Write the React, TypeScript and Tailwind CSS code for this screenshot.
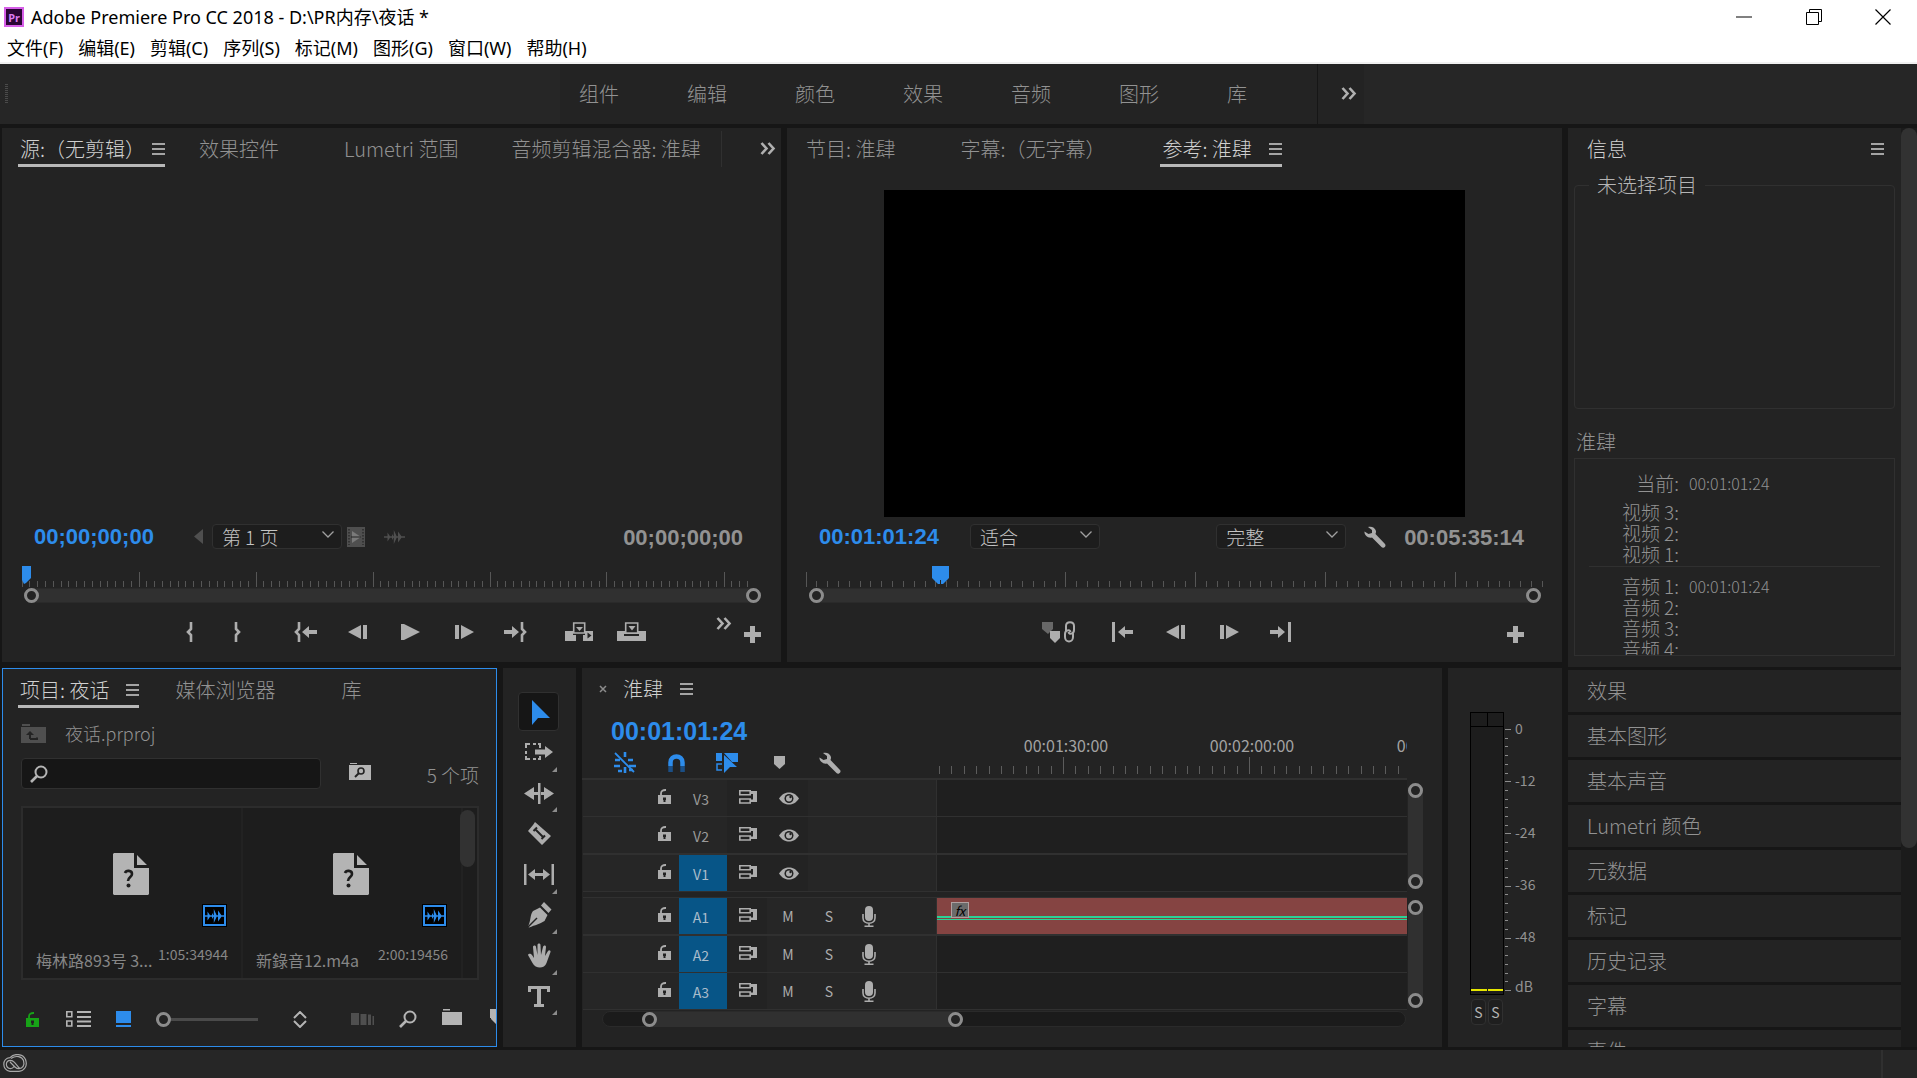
import React from "react";
import clsx from "clsx";

type IconProps = { w: number; h: number; className?: string; children: React.ReactNode };

const Icon = ({ w, h, className, children }: IconProps) => (
  <svg width={w} height={h} viewBox={`0 0 ${w} ${h}`} fill="currentColor" className={clsx("shrink-0", className)} aria-hidden="true">
    {children}
  </svg>
);

/* ---------- icons ---------- */

const MenuLines = () => (
  <Icon w={13} h={12} className="text-[#a4a4a4]">
    <path d="M0 0h13v2H0zM0 5h13v2H0zM0 10h13v2H0z" />
  </Icon>
);

const DoubleChevron = () => (
  <Icon w={16} h={13} className="text-[#b0b0b0]">
    <path d="M1.5 1l5 5.5-5 5.5M8.5 1l5 5.5-5 5.5" fill="none" stroke="currentColor" strokeWidth="2.6" />
  </Icon>
);

const Plus = () => (
  <Icon w={17} h={17}>
    <path d="M6 0h5v6h6v5h-6v6H6v-6H0V6h6z" />
  </Icon>
);

const Wrench = () => (
  <Icon w={22} h={22}>
    <path d="M4 1C7 0 11 1 12 5c0 1 0 2-.5 3L21 18c1 1 .5 3-1 3.5-1 .5-2 0-2.5-.5L8 11.5C4 12.5 0 9 .5 5.5L4.500 8 8 7V4z" />
  </Icon>
);

const Magnifier = () => (
  <svg width="18" height="18" viewBox="0 0 18 18" fill="none" stroke="currentColor" aria-hidden="true">
    <circle cx="11" cy="7" r="5.5" strokeWidth="2" />
    <path d="M7 11L1 17" strokeWidth="2.6" />
  </svg>
);

const Lock = () => (
  <Icon w={13} h={15}>
    <path d="M0 6h13v9H0z" />
    <path d="M3 7V4.500C3 2 5 .8 8 1" fill="none" stroke="currentColor" strokeWidth="1.8" />
    <path d="M5 8.500h3v2.500H7.500v2h-2v-2H5z" fill="#222" />
  </Icon>
);

const SyncLock = () => (
  <Icon w={18} h={14}>
    <path d="M.8.8h10.400v4H.8zM.8 9h10.400v4H.8z" fill="none" stroke="currentColor" strokeWidth="1.6" />
    <path d="M11 1h7v11h-7V9.500h3V4h-3z" />
  </Icon>
);

const Eye = () => (
  <Icon w={20} h={13}>
    <path d="M0 6.500C3 2 6.500.5 10 .5s7 1.500 10 6c-3 4.500-6.500 6-10 6s-7-1.500-10-6z" />
    <circle cx="10" cy="6.5" r="4.5" fill="#222" />
    <circle cx="10" cy="6.5" r="3" />
    <circle cx="11.5" cy="5" r="1.2" fill="#222" />
  </Icon>
);

const Mic = () => (
  <Icon w={14} h={21}>
    <rect x="3" y="0" width="8" height="15" rx="4" />
    <path d="M1 8v4c0 7 12 7 12 0V8M7 17v3M2.500 20.200h9" fill="none" stroke="currentColor" strokeWidth="1.6" />
  </Icon>
);

const MarkIn = () => (
  <Icon w={7} h={20}>
    <path d="M5 0v7l-3 3 3 3v7" fill="none" stroke="currentColor" strokeWidth="2.6" />
  </Icon>
);

const MarkOut = () => (
  <Icon w={7} h={20}>
    <path d="M2 0v7l3 3-3 3v7" fill="none" stroke="currentColor" strokeWidth="2.6" />
  </Icon>
);

const GoToIn = () => (
  <Icon w={23} h={20}>
    <path d="M5 0v7l-3 3 3 3v7" fill="none" stroke="currentColor" strokeWidth="2.6" />
    <path d="M8 10l7-6v4h8v4h-8v4z" />
  </Icon>
);

const GoToOut = () => (
  <Icon w={23} h={20}>
    <path d="M18 0v7l3 3-3 3v7" fill="none" stroke="currentColor" strokeWidth="2.6" />
    <path d="M15 10L8 4v4H0v4h8v4z" />
  </Icon>
);

const StepBack = () => (
  <Icon w={19} h={14}>
    <path d="M13 0v14L0 7zM15 0h4v14h-4z" />
  </Icon>
);

const StepForward = () => (
  <Icon w={19} h={14}>
    <path d="M6 0v14l13-7zM0 0h4v14H0z" />
  </Icon>
);

const Play = () => (
  <Icon w={19} h={16}>
    <path d="M0 0h3l16 8-16 8H0z" />
  </Icon>
);

const Insert = () => (
  <Icon w={28} h={19}>
    <path d="M0 9h8v4h3v6H0zM20 9h8v10H18v-6h2z" />
    <path d="M8.700 1h11v10h-11z" fill="#232323" stroke="currentColor" strokeWidth="1.6" />
    <path d="M11 5h7l-3.500 4z" />
    <path d="M22.500 10.500v6l4-3z" fill="#232323" />
  </Icon>
);

const Overwrite = () => (
  <Icon w={29} h={19}>
    <path d="M0 9h29v10H0z" />
    <path d="M7 12h15v2H7z" fill="#232323" />
    <path d="M8.700 1h12v10h-12z" fill="#232323" stroke="currentColor" strokeWidth="1.6" />
    <path d="M11.500 4h7l-3.500 4.500z" />
  </Icon>
);

const MarkerLink = () => (
  <Icon w={33} h={22}>
    <path d="M0 1h11v7l-5 5-6-5z" opacity=".5" />
    <path d="M8 10h10v7l-5 5-5-5z" />
    <path d="M24 10V5c0-5 8-5 8 0v4c0 4-5 5-5.500 2M31 11v5c0 6-8 6-8 0v-3c0-4 5-5 5.500-2" fill="none" stroke="currentColor" strokeWidth="2" />
  </Icon>
);

const GoToStart = () => (
  <Icon w={21} h={20}>
    <path d="M0 0h3v20H0zM6 10l7-6v4h8v4h-8v4z" />
  </Icon>
);

const GoToEnd = () => (
  <Icon w={21} h={20}>
    <path d="M18 0h3v20h-3zM15 10L8 4v4H0v4h8v4z" />
  </Icon>
);

const FilmFrame = () => (
  <Icon w={18} h={20} className="text-[#4f4f4f]">
    <path d="M0 0h18v20H0z" />
    <path d="M2 2v16M16 2v16" stroke="#232323" strokeWidth="1.2" strokeDasharray="1.5 1.5" />
    <path d="M5 4l9 6-9 6z" fill="#7a7a7a" />
    <path d="M4 10h10" stroke="#232323" />
  </Icon>
);

const Waveform = () => (
  <Icon w={21} h={14}>
    <path d="M0 6.300h21v1.400H0zM3.500 2.500L6.500 7l-3 4.500zM8 4l2 3-2 3zM9.800 0l3.200 7-3.200 7zM14 1.500l4 5.500-4 5.500z" />
  </Icon>
);

const MarkerIcon = () => (
  <Icon w={11} h={13}>
    <path d="M0 0h11v8l-5.500 5L0 8z" />
  </Icon>
);

/* ---------- shared pieces ---------- */

const Ring = () => <span className="size-[15px] shrink-0 rounded-full border-[3px] border-[#8c8c8c] bg-[#232323]" />;

const Timecode = ({ value, blue }: { value: string; blue?: boolean }) => (
  <span
    className={clsx(
      "font-['Liberation_Sans',sans-serif] text-[22px] font-bold leading-6",
      blue ? "text-[#2d8ceb]" : "text-[#929292]"
    )}
  >
    {value}
  </span>
);

const Tab = ({ label, active, tight }: { label: string; active?: boolean; tight?: boolean }) => (
  <button
    className={clsx(
      "flex h-[39px] items-center whitespace-nowrap border-b-[3px] pl-[2px] pt-[5px] leading-6",
      tight ? "gap-[7px]" : "gap-[17px]",
      active ? "border-[#b8b8b8] text-[#d0d0d0]" : "border-transparent text-[#929292]"
    )}
  >
    {label}
    {active && <MenuLines />}
  </button>
);

const Dropdown = ({ label, value }: { label: string; value: string }) => (
  <div className="relative">
    <select
      aria-label={label}
      className="h-[25px] w-[130px] appearance-none rounded border border-[#303030] bg-[#1d1d1d] pl-[9px] text-[19px] leading-5 text-[#c4c4c4]"
    >
      <option>{value}</option>
    </select>
    <Icon w={12} h={7} className="pointer-events-none absolute right-2 top-[9px] text-[#a0a0a0]">
      <path d="M.5.5L6 6 11.500.5" fill="none" stroke="currentColor" strokeWidth="1.3" />
    </Icon>
  </div>
);

type RulerProps = { span: number; step: number; every: number; head: number; headW: number };

// ticks are placed in percent so that the ruler stretches with its panel
const Ruler = ({ span, step, every, head, headW }: RulerProps) => {
  const count = Math.floor(span / step) + 1;
  return (
    <div className="relative flex h-8 items-end">
      <svg width="100%" height="16" className="overflow-visible">
        {Array.from({ length: count }, (_, i) => (
          <line
            key={i}
            x1={`${((i * step) / span) * 100}%`}
            x2={`${((i * step) / span) * 100}%`}
            y1={i % every === 0 ? 0 : 9}
            y2={15}
            stroke="#565656"
            shapeRendering="crispEdges"
          />
        ))}
      </svg>
      <svg width={headW} height="18" className="absolute top-2.5" style={{ left: `${(head / span) * 100}%` }}>
        {headW > 10 ? (
          <path d="M0 0h17v12l-6 6h-2v-4h-1v4H6l-6-6z" fill="#2d8ceb" />
        ) : (
          <path d="M0 0h9v12l-5 5-2 1-2-4z" fill="#2d8ceb" />
        )}
      </svg>
    </div>
  );
};

const ZoomBar = () => (
  <div className="flex h-[15px] items-center justify-between rounded-full border-y border-[#2a2a2a] bg-[#303030]">
    <Ring />
    <Ring />
  </div>
);

const TransportButton = ({ name, className, children }: { name: string; className?: string; children: React.ReactNode }) => (
  <button aria-label={name} className={clsx("flex h-8 items-center justify-center", className)}>
    {children}
  </button>
);

/* ---------- window chrome ---------- */

const menus = ["文件(F)", "编辑(E)", "剪辑(C)", "序列(S)", "标记(M)", "图形(G)", "窗口(W)", "帮助(H)"];

const TitleBar = () => (
  <header className="border-b-2 border-[#f0f0f0] bg-white font-['Noto_Sans','Noto_Sans_CJK_SC',sans-serif] text-[18px] font-normal text-black">
    <div className="flex h-[34px] items-center pl-1">
      <span className="flex size-5 items-center justify-center border-2 border-[#d65fe8] bg-[#2a0634] text-[11px] font-bold leading-none text-[#dd7bf0]">
        Pr
      </span>
      <h1 className="ml-[7px] whitespace-nowrap leading-6">Adobe Premiere Pro CC 2018 - D:\PR内存\夜话 *</h1>
      <div className="ml-auto flex">
        <button aria-label="最小化" className="flex h-[34px] w-[70px] items-center justify-center">
          <Icon w={16} h={16}><path d="M0 7.500h16v1H0z" /></Icon>
        </button>
        <button aria-label="还原" className="flex h-[34px] w-[70px] items-center justify-center">
          <Icon w={16} h={16}>
            <path d="M.5 3.500h12v12H.5zM3.500 3.500v-3h12v12h-3" fill="none" stroke="currentColor" />
          </Icon>
        </button>
        <button aria-label="关闭" className="flex h-[34px] w-[68px] items-center justify-center">
          <Icon w={16} h={16}><path d="M.5.5l15 15M15.500.5l-15 15" stroke="currentColor" strokeWidth="1.2" /></Icon>
        </button>
      </div>
    </div>
    <nav className="flex h-7 items-center gap-[15px] pl-[7px]">
      {menus.map((m) => (
        <button key={m} className="leading-6">{m}</button>
      ))}
    </nav>
  </header>
);

const workspaces = ["组件", "编辑", "颜色", "效果", "音频", "图形", "库"];

const WorkspaceBar = () => (
  <nav className="flex h-[60px] shrink-0 items-stretch bg-[#262626]">
    <div className="flex w-[560px] items-center pl-[5px]">
      <Icon w={3} h={20} className="text-[#4a4a4a]">
        <path d="M1.500 0v20" stroke="currentColor" strokeWidth="3" strokeDasharray="1 1" />
      </Icon>
    </div>
    <div className="flex w-[758px] items-center gap-[68px] border-r border-[#161616] bg-[#232323] pb-px pl-[19px]">
      {workspaces.map((w) => (
        <button key={w} className="leading-6 text-[#929292]">{w}</button>
      ))}
    </div>
    <button aria-label="更多工作区" className="flex w-[46px] items-center justify-center bg-[#232323] pb-0.5 pl-4">
      <DoubleChevron />
    </button>
  </nav>
);

/* ---------- monitors ---------- */

const SourceMonitor = () => (
  <section className="flex min-w-0 flex-[779_1_0%] flex-col bg-[#232323]">
    <div className="flex h-10 items-start pl-4">
      <Tab label="源:（无剪辑）" active tight />
      <div className="ml-8"><Tab label="效果控件" /></div>
      <div className="ml-[63px]"><Tab label="Lumetri 范围" /></div>
      <div className="ml-[51px]"><Tab label="音频剪辑混合器: 淮肆" /></div>
      <button aria-label="更多面板" className="ml-auto mt-[3px] flex h-9 items-center border-l border-[#303030] pb-0.5 pl-[38px] pr-[5px]">
        <DoubleChevron />
      </button>
    </div>
    <div className="min-h-0 flex-1" />
    <div className="flex h-[39px] items-center pl-8 pr-[38px]">
      <Timecode value="00;00;00;00" blue />
      <button aria-label="上一页" className="ml-10 mr-[9px] text-[#4f4f4f]">
        <Icon w={9} h={15}><path d="M9 0v15L0 7.500z" /></Icon>
      </button>
      <Dropdown label="页" value="第 1 页" />
      <span className="ml-[5px]"><FilmFrame /></span>
      <span className="ml-[19px] text-[#4f4f4f]"><Waveform /></span>
      <span className="ml-auto"><Timecode value="00;00;00;00" /></span>
    </div>
    <div className="pl-5 pr-[27px]">
      <Ruler span={732} step={7.8} every={15} head={0} headW={9} />
    </div>
    <div className="pl-[22px] pr-5"><ZoomBar /></div>
    <div className="flex h-[59px] items-center pb-0.5 pl-[163px] pr-5 text-[#adadad]">
      <TransportButton name="标记入点" className="w-12"><MarkIn /></TransportButton>
      <TransportButton name="标记出点" className="w-[49px]"><MarkOut /></TransportButton>
      <TransportButton name="转到入点" className="ml-[17px] w-[52px]"><GoToIn /></TransportButton>
      <TransportButton name="后退一帧" className="w-[52px]"><StepBack /></TransportButton>
      <TransportButton name="播放" className="w-[54px]"><Play /></TransportButton>
      <TransportButton name="前进一帧" className="w-[54px]"><StepForward /></TransportButton>
      <TransportButton name="转到出点" className="w-12"><GoToOut /></TransportButton>
      <TransportButton name="插入" className="ml-3.5 w-[52px]"><Insert /></TransportButton>
      <TransportButton name="覆盖" className="w-[52px]"><Overwrite /></TransportButton>
      <TransportButton name="更多按钮" className="ml-auto pb-4"><DoubleChevron /></TransportButton>
      <TransportButton name="按钮编辑器" className="ml-3 pt-1.5"><Plus /></TransportButton>
    </div>
  </section>
);

const ProgramMonitor = () => (
  <section className="flex min-w-0 flex-[775_1_0%] flex-col bg-[#232323]">
    <div className="flex h-10 items-start pl-[17px]">
      <Tab label="节目: 淮肆" />
      <div className="ml-[63px]"><Tab label="字幕:（无字幕）" /></div>
      <div className="ml-[55px]"><Tab label="参考: 淮肆" active /></div>
    </div>
    <div className="flex min-h-0 flex-1 justify-center pt-[22px]">
      <div className="aspect-video h-full bg-black" />
    </div>
    <div className="flex h-[39px] items-center pl-8 pr-[38px]">
      <Timecode value="00:01:01:24" blue />
      <div className="ml-[31px]"><Dropdown label="缩放级别" value="适合" /></div>
      <div className="ml-auto"><Dropdown label="回放分辨率" value="完整" /></div>
      <button aria-label="设置" className="ml-[18px] text-[#adadad]"><Wrench /></button>
      <span className="ml-[18px]"><Timecode value="00:05:35:14" /></span>
    </div>
    <div className="pl-[19px] pr-[19px]">
      <Ruler span={737} step={10.83} every={12} head={126} headW={17} />
    </div>
    <div className="pl-[22px] pr-[21px]"><ZoomBar /></div>
    <div className="flex h-[59px] items-center pb-0.5 pl-[245px] pr-[38px] text-[#adadad]">
      <TransportButton name="绞合到节目监视器" className="w-[52px]"><MarkerLink /></TransportButton>
      <TransportButton name="转到开始" className="ml-3 w-[52px]"><GoToStart /></TransportButton>
      <TransportButton name="后退一帧" className="w-[54px]"><StepBack /></TransportButton>
      <TransportButton name="前进一帧" className="w-[54px]"><StepForward /></TransportButton>
      <TransportButton name="转到结束" className="w-12"><GoToEnd /></TransportButton>
      <TransportButton name="按钮编辑器" className="ml-auto pt-1.5"><Plus /></TransportButton>
    </div>
  </section>
);

/* ---------- project ---------- */

const clips = [
  { name: "梅林路893号 3...", time: "1:05:34944" },
  { name: "新錄音12.m4a", time: "2:00:19456" },
];

const ClipCard = ({ name, time }: { name: string; time: string }) => (
  <div className="flex w-[220px] shrink-0 flex-col border-r-2 border-[#222] px-[13px]">
    <div className="flex h-[87px] items-end justify-center pr-0.5">
      <svg width="36" height="42" viewBox="0 0 36 42" fill="#b4b4b4" aria-hidden="true">
        <path d="M1 0h20v15h15v26l-1 1H1l-1-1V1zM24 2l10 10H24z" />
        <path d="M12 20c1-3 7-3 7 1 0 3-4 3-4 7" fill="none" stroke="#1d1d1d" strokeWidth="2.6" />
        <circle cx="15.5" cy="32.5" r="2" fill="#1d1d1d" />
      </svg>
    </div>
    <span className="mr-0.5 mt-2.5 flex h-[21px] w-[23px] items-center justify-center self-end border-2 border-[#2d8ceb] bg-black text-[#2d8ceb] ring-1 ring-black">
      <Waveform />
    </span>
    <div className="mt-[18px] flex justify-between whitespace-nowrap font-normal text-[#868686]">
      <span className="pt-1.5 text-[16px] leading-5">{name}</span>
      <span className="text-[14px] leading-5">{time}</span>
    </div>
  </div>
);

const ProjectPanel = () => (
  <section className="flex w-[495px] shrink-0 flex-col overflow-hidden border border-[#2d8ceb] bg-[#232323]">
    <div className="flex h-[39px] items-start pl-[15px]">
      <Tab label="项目: 夜话" active />
      <div className="ml-[34px]"><Tab label="媒体浏览器" /></div>
      <div className="ml-[64px]"><Tab label="库" /></div>
    </div>
    <div className="mb-[3px] mt-[11px] flex h-7 items-center pl-[18px] text-[#929292]">
      <Icon w={25} h={19} className="text-[#4f4f4f]">
        <path d="M1 0h8v2H1zM0 3h25v16H0z" />
        <path d="M9 15h7v-1.500M9 15V9" fill="none" stroke="#232323" strokeWidth="2" />
        <path d="M5 11l4-4 4 4z" fill="#232323" />
      </Icon>
      <span className="ml-[19px] text-[18px] leading-6">夜话.prproj</span>
    </div>
    <div className="mt-2 flex h-[31px] items-center pl-[18px] pr-[17px]">
      <label className="flex h-[31px] w-[300px] items-center rounded border border-[#303030] bg-[#161616] pl-2 text-[#b4b4b4]">
        <Magnifier />
        <input type="text" aria-label="搜索素材" className="ml-2 w-60 bg-transparent outline-none" />
      </label>
      <button aria-label="从查询创建新的搜索素材箱" className="mb-1 ml-7 text-[#b4b4b4]">
        <Icon w={22} h={17}>
          <path d="M1 0h7v1H1zM0 2h22v15H0z" />
          <circle cx="12" cy="8" r="3" fill="none" stroke="#232323" strokeWidth="1.6" />
          <path d="M10 10l-4 4" stroke="#232323" strokeWidth="2" />
        </Icon>
      </button>
      <span className="ml-auto pt-1 text-[19px] text-[#929292]">5 个项</span>
    </div>
    <div className="ml-[18px] mr-[17px] mt-[17px] flex h-[174px] overflow-hidden border-2 border-[#2c2c2c] bg-[#1d1d1d]">
      {clips.map((c) => (
        <ClipCard key={c.name} {...c} />
      ))}
      <div className="-ml-[3px] pt-0.5">
        <div className="h-[57px] w-[15px] rounded-full bg-[#323232]" />
      </div>
    </div>
    <div className="mt-[21px] flex h-9 items-center pl-[23px] text-[#b4b4b4]">
      <button aria-label="项目可写" className="text-[#17a317]"><Lock /></button>
      <button aria-label="列表视图" className="ml-[27px]">
        <Icon w={25} h={16}>
          <path d="M.8.8h5v5h-5zM.8 10h5v5h-5z" fill="none" stroke="currentColor" strokeWidth="1.6" />
          <path d="M11 0h14v2H11zM11 5h14v2H11zM11 9.500h14v2H11zM11 14h14v2H11z" />
        </Icon>
      </button>
      <button aria-label="图标视图" className="ml-[25px] text-[#2d8ceb]">
        <Icon w={15} h={16}><path d="M0 0h15v12H0zM0 14h15v2H0z" /></Icon>
      </button>
      <input
        type="range"
        aria-label="缩放"
        defaultValue={0}
        className="ml-[25px] h-[15px] w-[102px] appearance-none bg-transparent [&::-webkit-slider-runnable-track]:h-[3px] [&::-webkit-slider-runnable-track]:bg-[#4a4a4a] [&::-webkit-slider-thumb]:-mt-1.5 [&::-webkit-slider-thumb]:size-[15px] [&::-webkit-slider-thumb]:appearance-none [&::-webkit-slider-thumb]:rounded-full [&::-webkit-slider-thumb]:border-[3px] [&::-webkit-slider-thumb]:border-[#8c8c8c] [&::-webkit-slider-thumb]:bg-[#232323]"
      />
      <button aria-label="排序图标" className="ml-[35px]">
        <Icon w={14} h={17}>
          <path d="M1 7l6-6 6 6M1 10l6 6 6-6" fill="none" stroke="currentColor" strokeWidth="2" />
        </Icon>
      </button>
      <button aria-label="自动匹配序列" className="ml-11 text-[#4f4f4f]">
        <Icon w={23} h={12}><path d="M0 0h8v12H0zM9.500 1h6v11h-6zM17 1.500h3V12h-3zM21.500 3H23v9h-1.500z" /></Icon>
      </button>
      <button aria-label="查找" className="ml-[25px]"><Magnifier /></button>
      <button aria-label="新建素材箱" className="ml-[25px] pb-1">
        <Icon w={20} h={16}><path d="M1 0h7v1.500H1zM0 3h20v13H0z" /></Icon>
      </button>
      <button aria-label="新建项" className="ml-7 pb-1">
        <Icon w={14} h={16}><path d="M0 0h14v10H7v6L1 10V9H0z" /></Icon>
      </button>
    </div>
  </section>
);

/* ---------- tools ---------- */

const tools = [
  {
    name: "选择工具",
    flyout: false,
    art: <path d="M8 3v25l6-7h12z" />,
  },
  {
    name: "向前选择轨道工具",
    flyout: true,
    art: (
      <>
        <path d="M2 11V7h4M9 7h3M14 7h2v4M2 14v3M2 19v3h4M9 22h3M14 22h2v-3" fill="none" stroke="currentColor" strokeWidth="2" />
        <path d="M11 12.500h10V9l8 6-8 6v-3.500H11z" />
      </>
    ),
  },
  {
    name: "波纹编辑工具",
    flyout: true,
    art: <path d="M14 5h2.500v21H14zM0 15.500L10 9v5h4v3h-4v5zM30 15.500L20 9v5h-4v3h4v5z" />,
  },
  {
    name: "剃刀工具",
    flyout: false,
    art: (
      <>
        <path d="M11 4l16 14-9 9L4 13l5-6z" />
        <path d="M11 11l8 8M9.500 13l3.500-3.500M17.500 21l3.500-3.500" stroke="#232323" strokeWidth="2" />
      </>
    ),
  },
  {
    name: "外滑工具",
    flyout: true,
    art: <path d="M0 5h2.500v21H0zM27.500 5H30v21h-2.500zM4 15.500L11 10v4h8v-4l7 5.500-7 5.500v-4h-8v4z" />,
  },
  {
    name: "钢笔工具",
    flyout: true,
    art: (
      <>
        <path d="M16 7.500l7.500 7.500-3 6c-5 3-9 4-15.500 6.500l-1-1c3-6 2-12 5-15.500zM20 2l7.500 7.500-3 3.500L17 5.500z" />
        <path d="M4 27l9-9" stroke="#232323" strokeWidth="1.5" />
      </>
    ),
  },
  {
    name: "手形工具",
    flyout: true,
    art: (
      <path d="M4 15c1-2 3-1 4 0l2 3-1-11c0-2 3-2 3 0l1.500 8V5c0-2 3-2 3 0l.5 10 2-8c.5-2 3-2 3 0l-1 9 3-5c1-1.500 3-.5 2.500 1l-4 11c-2 6-11 6-14 0z" />
    ),
  },
  {
    name: "文字工具",
    flyout: true,
    art: <path d="M4 5h22v6h-3V8h-6v15h3v3h-10v-3h3V8H7v3H4z" />,
  },
];

const ToolsPanel = () => (
  <section className="w-[73px] shrink-0 bg-[#232323] pr-0.5 pt-6">
    <div className="grid h-[325px] grid-rows-8 justify-center">
      {tools.map((t, i) => (
        <button
          key={t.name}
          aria-label={t.name}
          className={clsx(
            "relative flex h-[39px] w-[41px] items-center justify-center rounded",
            i === 0 ? "border border-[#303030] bg-[#161616] text-[#2d8ceb]" : "text-[#adadad]"
          )}
        >
          <Icon w={30} h={30}>{t.art}</Icon>
          {t.flyout && (
            <Icon w={5} h={5} className="absolute bottom-0 right-0.5 text-[#8c8c8c]"><path d="M5 0v5H0z" /></Icon>
          )}
        </button>
      ))}
    </div>
  </section>
);

/* ---------- timeline ---------- */

const tracks = [
  { id: "V3", kind: "video", on: false, row: "h-[37px] border-b" },
  { id: "V2", kind: "video", on: false, row: "h-[38px] border-b-2" },
  { id: "V1", kind: "video", on: true, row: "h-[37px] border-b" },
  { id: "A1", kind: "audio", on: true, row: "h-[38px] border-b-2" },
  { id: "A2", kind: "audio", on: true, row: "h-[37px] border-b" },
  { id: "A3", kind: "audio", on: true, row: "h-[37px] border-b" },
];

const Track = ({ id, kind, on, row }: (typeof tracks)[number]) => (
  <div className={clsx("flex border-[#303030] font-normal", row)}>
    <div className="flex w-[354px] shrink-0 items-stretch border-r border-[#303030] bg-[#262626] text-[#adadad]">
      <button aria-label={`锁定 ${id}`} className="flex w-[96px] items-center justify-end pb-1 pr-2"><Lock /></button>
      <button
        className={clsx(
          "w-12 pr-1 pt-0.5 text-[14px]",
          on ? "bg-[#075587] text-[#a9bccb]" : "text-[#9a9a9a]"
        )}
      >
        {id}
      </button>
      <div className={clsx("flex items-center bg-[#232323] pl-3", kind === "video" ? "w-[81px]" : "w-10")}>
        <button aria-label={`同步锁定 ${id}`} className="pb-[3px]"><SyncLock /></button>
        {kind === "video" && <button aria-label={`切换轨道输出 ${id}`} className="ml-[22px] pt-px"><Eye /></button>}
      </div>
      {kind === "audio" && (
        <div className="flex items-center pl-2">
          <button className="w-[26px] text-[14px] leading-5">M</button>
          <button className="ml-[15px] w-[26px] text-[14px] leading-5">S</button>
          <button aria-label={`画外音录制 ${id}`} className="ml-5"><Mic /></button>
        </div>
      )}
    </div>
    <div className="min-w-0 flex-1 bg-[#1f1f1f]">
      {id === "A1" && (
        <div className="relative flex h-9 flex-col justify-center bg-[#854442] pt-[3px]">
          <div className="h-0.5 bg-[#2bd296]" />
          <div className="mt-px h-px bg-[#2bd296]" />
          <span className="absolute left-3.5 top-1 flex h-4 w-[18px] items-center justify-center border border-[#b0a0a0] bg-[#6b6b6b] text-[13px] italic leading-none text-black">
            fx
          </span>
        </div>
      )}
    </div>
  </div>
);

const TimelineRuler = () => (
  <svg width="100%" height="52" className="block font-normal" fontSize="16" fill="#a2a2a2" textAnchor="middle">
    {Array.from({ length: 38 }, (_, i) => {
      const x = Math.round(2 + i * 12.4) + 0.5;
      const major = i % 15 === 10;
      return <line key={i} x1={x} x2={x} y1={major ? 27 : 36} y2={44} stroke="#5c5c5c" />;
    })}
    <text x="129" y="22">00:01:30:00</text>
    <text x="315" y="22">00:02:00:00</text>
    <text x="502" y="22">00:02:30:00</text>
  </svg>
);

const TimelinePanel = () => (
  <section className="flex min-w-0 flex-1 flex-col bg-[#232323]">
    <div className="flex h-[42px] items-center pl-[17px] text-[#d0d0d0]">
      <button aria-label="关闭序列" className="text-[#8c8c8c]">
        <Icon w={8} h={8}><path d="M1 1l6 6M7 1L1 7" stroke="currentColor" strokeWidth="1.5" /></Icon>
      </button>
      <button className="ml-4 flex items-center gap-[17px] leading-6">淮肆<MenuLines /></button>
    </div>
    <div className="flex h-[68px]">
      <div className="w-[355px] shrink-0 pl-[29px]">
        <div className="pt-[7px] font-['Liberation_Sans',sans-serif] text-[25px] font-bold leading-7 text-[#2d8ceb]">00:01:01:24</div>
        <div className="flex h-7 items-center pt-[7px] text-[#2d8ceb]">
          <button aria-label="嵌套" className="ml-[3px]">
            <Icon w={22} h={21}>
              <path d="M11 0v5M11 15v6M1 8h5M14 8h5M0 14h6M15 14h7M4 19h4M15 18h4" stroke="currentColor" strokeWidth="2.6" />
              <path d="M1 1l19 19" stroke="currentColor" strokeWidth="1.8" />
            </Icon>
          </button>
          <button aria-label="对齐" className="ml-8">
            <Icon w={17} h={18}>
              <path d="M2.500 12V8.500c0-8 12-8 12 0V12" fill="none" stroke="currentColor" strokeWidth="4.5" />
              <path d="M.3 12h4.500v6H.3zM12.300 12h4.500v6h-4.500z" fill="#1b4f86" />
            </Icon>
          </button>
          <button aria-label="链接选择项" className="ml-[31px]">
            <Icon w={22} h={20}>
              <path d="M0 0h6v8H0zM8 0h14v9h-6z" />
              <path d="M6 11H1v6h5" fill="none" stroke="currentColor" strokeWidth="1.5" />
              <path d="M8 2l13 12h-7l-6 6z" />
            </Icon>
          </button>
          <button aria-label="添加标记" className="ml-9 text-[#adadad]"><MarkerIcon /></button>
          <button aria-label="时间轴显示设置" className="ml-[34px] text-[#adadad]"><Wrench /></button>
        </div>
      </div>
      <div className="min-w-0 flex-1 overflow-hidden pr-[35px] pt-5">
        <TimelineRuler />
      </div>
    </div>
    <div className="flex">
      <div className="min-w-0 flex-1 border-t-2 border-[#303030] pl-px">
        {tracks.slice(0, 3).map((t) => <Track key={t.id} {...t} />)}
        <div className="h-1.5 border-b border-[#303030]" />
        {tracks.slice(3).map((t) => <Track key={t.id} {...t} />)}
      </div>
      <div className="flex w-[35px] flex-col gap-[11px] pl-px pt-[5px]">
        <div className="flex h-[106px] w-[15px] flex-col justify-between rounded-full bg-[#303030]"><Ring /><Ring /></div>
        <div className="flex h-[108px] w-[15px] flex-col justify-between rounded-full bg-[#303030]"><Ring /><Ring /></div>
      </div>
    </div>
    <div className="ml-5 mr-9 mt-px flex h-4 items-center rounded-full border border-[#2a2a2a] bg-[#1b1b1b]">
      <div className="ml-[39px] flex w-2/5 items-center justify-between rounded-full bg-[#303030]"><Ring /><Ring /></div>
    </div>
  </section>
);

/* ---------- audio meters ---------- */

const MetersPanel = () => (
  <section className="flex w-[114px] shrink-0 flex-col bg-[#232323] pl-[22px] pt-11 font-normal">
    <div className="flex h-[287px]">
      <div className="flex h-[283px] w-[34px] flex-col border border-black bg-[#1d1d1d]">
        <div className="flex h-3.5 border-b border-black">
          <div className="flex-1 border-r border-black" />
          <div className="flex-1" />
        </div>
        <div className="mb-[3px] mt-auto flex gap-px">
          <div className="h-0.5 flex-1 bg-[#e6e600]" />
          <div className="h-0.5 flex-1 bg-[#e6e600]" />
        </div>
      </div>
      <svg width="50" height="287" fontSize="14" fill="#929292">
        {Array.from({ length: 31 }, (_, i) => (
          <line
            key={i}
            x1="1"
            x2={i % 6 === 0 ? 7 : 4}
            y1={Math.round(17 + i * 8.7) + 0.5}
            y2={Math.round(17 + i * 8.7) + 0.5}
            stroke="#8c8c8c"
          />
        ))}
        {["0", "-12", "-24", "-36", "-48", "dB"].map((t, i) => (
          <text key={t} x="11" y={t === "dB" ? 280 : 22 + i * 52}>{t}</text>
        ))}
      </svg>
    </div>
    <div className="flex gap-0.5 pl-px text-[14px] leading-5 text-[#b4b4b4]">
      <button className="h-[26px] w-[15px] rounded border border-[#303030] bg-[#1f1f1f]">S</button>
      <button className="h-[26px] w-[15px] rounded border border-[#303030] bg-[#1f1f1f]">S</button>
    </div>
  </section>
);

/* ---------- right side ---------- */

const InfoRow = ({ label, value }: { label: string; value?: string }) => (
  <div className="flex h-[21px] shrink-0 items-center">
    <dt className="w-[104px] text-right text-[19px] leading-5">{label}</dt>
    <dd className="ml-2.5 text-[16px] leading-5">{value}</dd>
  </div>
);

const sections = ["效果", "基本图形", "基本声音", "Lumetri 颜色", "元数据", "标记", "历史记录", "字幕", "事件"];

const InfoColumn = () => (
  <aside className="flex w-[349px] shrink-0">
    <div className="min-w-0 flex-1 overflow-hidden bg-[#232323] text-[#929292]">
      <div className="flex h-10 items-center justify-between pl-[19px] pr-[17px] pt-0.5 text-[#d0d0d0]">
        <h2>信息</h2>
        <button aria-label="面板菜单"><MenuLines /></button>
      </div>
      <fieldset className="mx-1.5 mt-[5px] h-[236px] rounded border border-[#303030] pl-[14px]">
        <legend className="px-2 leading-6 text-[#b4b4b4]">未选择项目</legend>
      </fieldset>
      <h3 className="mt-[21px] pl-2 leading-6">淮肆</h3>
      <dl className="mx-[6px] mt-1 flex h-[198px] flex-col overflow-hidden border border-[#303030] pt-[13px]">
        <InfoRow label="当前:" value="00:01:01:24" />
        <div className="h-2 shrink-0" />
        <InfoRow label="视频 3:" />
        <InfoRow label="视频 2:" />
        <InfoRow label="视频 1:" />
        <div className="mx-3.5 mb-2 mt-0.5 h-px shrink-0 bg-[#303030]" />
        <InfoRow label="音频 1:" value="00:01:01:24" />
        <InfoRow label="音频 2:" />
        <InfoRow label="音频 3:" />
        <InfoRow label="音频 4:" />
      </dl>
      <div className="mt-[11px]">
        {sections.map((s) => (
          <button key={s} className="flex h-[45px] w-full items-center border-t-[3px] border-[#161616] pl-[19px] text-left leading-6">
            {s}
          </button>
        ))}
      </div>
    </div>
    <div className="w-4 shrink-0 bg-[#1b1b1b]">
      <div className="h-[720px] rounded-full bg-[#323232]" />
    </div>
  </aside>
);

export default function App() {
  return (
    <div className="flex h-screen flex-col overflow-hidden bg-[#161616] font-['Noto_Sans_CJK_SC',sans-serif] text-[20px] font-light">
      <TitleBar />
      <WorkspaceBar />
      <main className="flex min-h-0 flex-1 gap-1.5 pb-[3px] pl-0.5 pt-1">
        <div className="flex min-w-0 flex-1 flex-col gap-1.5">
          <div className="flex min-h-0 flex-1 gap-1.5">
            <SourceMonitor />
            <ProgramMonitor />
          </div>
          <div className="flex h-[379px] shrink-0 gap-1.5">
            <ProjectPanel />
            <ToolsPanel />
            <TimelinePanel />
            <MetersPanel />
          </div>
        </div>
        <InfoColumn />
      </main>
      <footer className="flex h-7 shrink-0 items-center bg-[#262626] pl-[3px] pr-[34px]">
        <svg width="24" height="18" viewBox="0 0 24 18" fill="none" stroke="#a8a8a8" strokeWidth="1.2" className="mb-0.5" aria-hidden="true">
          <path d="M7 17.300C-1 16-1.500 4.500 7 3.700 11-1 20-.5 22.500 5.500 25 12 21 17 16 17.300z" />
          <path d="M7.500 14.700C2 14 2 6.500 7.500 6.300c2 0 3 1 4 2l5 6M11 12.500c-1 1.500-2 2.200-3.500 2.200M8 4.500c5-3.500 11-2 12.500 2 1.500 5-1 8-4.500 8.200-2 0-3-.7-4-1.700L7 8" />
        </svg>
        <div className="ml-auto h-full w-0.5 bg-[#303030]" />
      </footer>
    </div>
  );
}
